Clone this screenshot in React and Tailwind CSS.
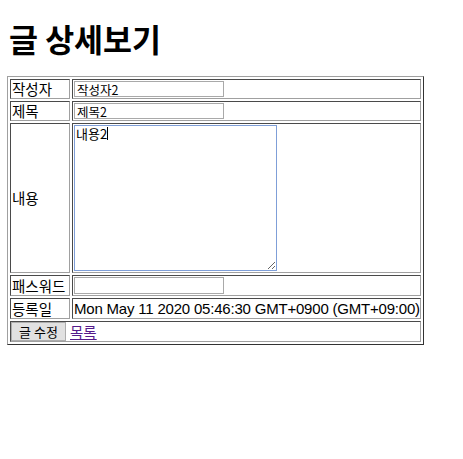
export default function App() {
  const edge = "border border-solid border-t-[#4a4a4a] border-l-[#4a4a4a] border-b-[#a0a0a0] border-r-[#a0a0a0]";
  const label = `${edge} p-px text-[14.5px] leading-[16px] whitespace-nowrap align-middle`;
  const cell = `${edge} p-px leading-[16px] align-middle`;
  const field = "block w-[150px] border border-[#a9a9a9] px-[2px] text-[12.5px] leading-[14px] bg-white";

  return (
    <div className="bg-white min-h-[459px] px-2 pt-[21px] text-black font-['Noto_Sans_CJK_KR','Noto_Sans',sans-serif]">
      <h1 className="text-[31.5px] font-bold leading-[34px] mb-[21px] pl-px">글 상세보기</h1>
      <table className="table-fixed border-separate border-spacing-[2px] border border-solid border-t-[#a0a0a0] border-l-[#a0a0a0] border-b-[#333333] border-r-[#333333] w-[417px] -ml-px">
        <tbody>
          <tr>
            <td className={`${label} w-[60px]`}>작성자</td>
            <td className={cell}>
              <input type="text" defaultValue="작성자2" className={`${field} h-[16px]`} />
            </td>
          </tr>
          <tr>
            <td className={label}>제목</td>
            <td className={cell}>
              <input type="text" defaultValue="제목2" className={`${field} h-[16px]`} />
            </td>
          </tr>
          <tr>
            <td className={label}>내용</td>
            <td className={cell}>
              <div className="relative w-[203px]">
                <textarea
                  defaultValue="내용2"
                  className="block w-[203px] h-[146px] border border-solid border-[#7f9fd8] px-px py-0 text-[13px] leading-[15px] bg-white resize"
                />
                <span className="absolute left-[33px] top-[2px] w-px h-[13px] bg-black" />
              </div>
            </td>
          </tr>
          <tr>
            <td className={label}>패스워드</td>
            <td className={cell}>
              <input type="password" className={`${field} h-[17px]`} />
            </td>
          </tr>
          <tr>
            <td className={label}>등록일</td>
            <td className={`${cell} leading-[17px] whitespace-nowrap font-['Liberation_Sans',sans-serif] text-[15px] tracking-[-0.2px]`}>
              Mon May 11 2020 05:46:30 GMT+0900 (GMT+09:00)
            </td>
          </tr>
          <tr>
            <td colSpan={2} className={`${edge} p-0 whitespace-nowrap`}>
              <div className="flex items-center gap-[4px]">
                <button
                  type="button"
                  className="h-[19px] w-[55px] border border-solid border-[#adadad] bg-[#e1e1e1] text-[13px] leading-[17px] text-black"
                >
                  글 수정
                </button>
                <a href="#" className="text-[#551a8b] underline text-[14.5px] leading-[17px]">
                  목록
                </a>
              </div>
            </td>
          </tr>
        </tbody>
      </table>
    </div>
  );
}
